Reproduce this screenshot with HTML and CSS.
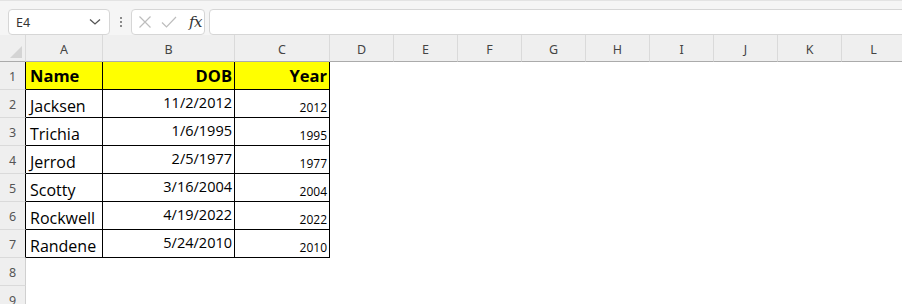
FILE: index.html
```html
<html>
    <head>
        <title>Book1 - Excel</title>
    <link rel="stylesheet" href="styles.css">
    </head>
    <body>
      <div class="toolbar">
        <div class="namebox">
            <span>E4</span>
            <svg width="12" height="8" viewBox="0 0 12 8"><path d="M1 1.5 L6 6 L11 1.5" fill="none" stroke="#555" stroke-width="1.3"/></svg>
        </div>
        <div class="dots"><i></i><i></i><i></i></div>
        <div class="fxbox">
            <svg width="14" height="14" viewBox="0 0 14 14"><path d="M1.5 1.5 L12.5 12.5 M12.5 1.5 L1.5 12.5" stroke="#bdbdbd" stroke-width="1.2"/></svg>
            <svg width="16" height="14" viewBox="0 0 16 14"><path d="M1 7.5 L5.5 12 L15 2" fill="none" stroke="#bdbdbd" stroke-width="1.2"/></svg>
            <span class="fx">fx</span>
        </div>
        <div class="formulabar"></div>
      </div>

      <div class="sheet">
        <div class="corner"><span class="tri"></span></div>
        <div class="colhead">A</div>
        <div class="colhead">B</div>
        <div class="colhead">C</div>
        <div class="colhead">D</div>
        <div class="colhead">E</div>
        <div class="colhead">F</div>
        <div class="colhead">G</div>
        <div class="colhead">H</div>
        <div class="colhead">I</div>
        <div class="colhead">J</div>
        <div class="colhead">K</div>
        <div class="colhead">L</div>

        <div class="rowhead edge">1</div>
        <div class="cell title left">Name</div>
        <div class="cell title right">DOB</div>
        <div class="cell title right">Year</div>
        <div class="blank"></div>

        <div class="rowhead edge">2</div>
        <div class="cell name">Jacksen</div>
        <div class="cell date">11/2/2012</div>
        <div class="cell year">2012</div>
        <div class="blank"></div>

        <div class="rowhead edge">3</div>
        <div class="cell name">Trichia</div>
        <div class="cell date">1/6/1995</div>
        <div class="cell year">1995</div>
        <div class="blank"></div>

        <div class="rowhead edge">4</div>
        <div class="cell name">Jerrod</div>
        <div class="cell date">2/5/1977</div>
        <div class="cell year">1977</div>
        <div class="blank"></div>

        <div class="rowhead edge">5</div>
        <div class="cell name">Scotty</div>
        <div class="cell date">3/16/2004</div>
        <div class="cell year">2004</div>
        <div class="blank"></div>

        <div class="rowhead edge">6</div>
        <div class="cell name">Rockwell</div>
        <div class="cell date">4/19/2022</div>
        <div class="cell year">2022</div>
        <div class="blank"></div>

        <div class="rowhead edge">7</div>
        <div class="cell name">Randene</div>
        <div class="cell date">5/24/2010</div>
        <div class="cell year">2010</div>
        <div class="blank"></div>

        <div class="rowhead">8</div>
        <div class="blank full"></div>

        <div class="rowhead">9</div>
        <div class="blank full"></div>
      </div>
    </body>
</html>
```

FILE: styles.css
```css
*{
    margin: 0;
    padding: 0;
    box-sizing: border-box;
}
body{
    background: #fff;
    width: 902px;
    height: 304px;
    overflow: hidden;
    font-family: "Open Sans", "Noto Sans", sans-serif;
}
.toolbar{
    height: 35px;
    background: #f5f5f5;
    border-top: 1px solid #e3e3e3;
    padding: 8px 0 0 8px;
    display: flex;
    align-items: flex-start;
}
.namebox{
    width: 102px;
    height: 26px;
    background: #fff;
    border: 1px solid #d6d6d6;
    border-radius: 4px;
    display: flex;
    align-items: center;
    justify-content: space-between;
    padding: 0 8px 0 7px;
    font-family: "Noto Sans", sans-serif;
    font-size: 12.5px;
    color: #333;
}
.dots{
    width: 21px;
    height: 26px;
    display: flex;
    flex-direction: column;
    align-items: center;
    justify-content: center;
    gap: 2px;
}
.dots i{
    width: 2px;
    height: 2px;
    background: #8a8a8a;
}
.fxbox{
    width: 74px;
    height: 26px;
    background: #fff;
    border: 1px solid #d6d6d6;
    border-radius: 4px;
    display: flex;
    align-items: center;
    padding-left: 6px;
    gap: 9px;
}
.fx{
    font-family: "DejaVu Serif", "Liberation Serif", serif;
    font-style: italic;
    font-size: 15px;
    color: #333;
    margin-left: 3px;
    letter-spacing: -0.5px;
}
.formulabar{
    flex: 1;
    height: 26px;
    margin-left: 4px;
    margin-right: -6px;
    background: #fff;
    border: 1px solid #d6d6d6;
    border-radius: 4px;
}
.sheet{
    display: grid;
    grid-template-columns: 26px 77px 132px 95px repeat(9, 64px);
    grid-template-rows: 27px repeat(9, 28px);
}
.corner{
    background: #efefef;
    border-bottom: 1px solid #ababab;
    border-right: 1px solid #dadada;
    position: relative;
}
.tri{
    position: absolute;
    right: 3px;
    bottom: 3px;
    width: 0;
    height: 0;
    border-left: 12px solid transparent;
    border-bottom: 12px solid #d4d4d4;
}
.colhead{
    background: #efefef;
    border-bottom: 1px solid #ababab;
    border-right: 1px solid #dadada;
    display: flex;
    align-items: center;
    justify-content: center;
    font-family: "Noto Sans", sans-serif;
    font-size: 12.5px;
    color: #444;
    padding-top: 2px;
}
.rowhead{
    background: #efefef;
    border-bottom: 1px solid #dadada;
    border-right: 1px solid #d0d0d0;
    display: flex;
    align-items: center;
    justify-content: center;
    font-family: "Noto Sans", sans-serif;
    font-size: 12.5px;
    color: #555;
    padding-top: 2px;
}
.rowhead.edge{
    border-right-color: #000;
}
.blank{
    grid-column: 5 / 14;
}
.blank.full{
    grid-column: 2 / 14;
}
.cell{
    border-right: 1px solid #000;
    border-bottom: 1px solid #000;
    display: flex;
    align-items: flex-end;
    white-space: nowrap;
    color: #000;
}
.title{
    background: #ffff00;
    font-weight: 700;
    font-size: 16.5px;
    line-height: 23px;
    padding-bottom: 2px;
}
.left{
    padding-left: 4px;
}
.right{
    justify-content: flex-end;
    padding-right: 2px;
}
.name{
    font-size: 16px;
    line-height: 22px;
    padding-left: 4px;
}
.date{
    font-size: 14.5px;
    line-height: 20px;
    justify-content: flex-end;
    padding-right: 2px;
    padding-bottom: 4px;
}
.year{
    font-size: 12px;
    line-height: 16px;
    justify-content: flex-end;
    padding-right: 2px;
    padding-bottom: 1px;
}
```
